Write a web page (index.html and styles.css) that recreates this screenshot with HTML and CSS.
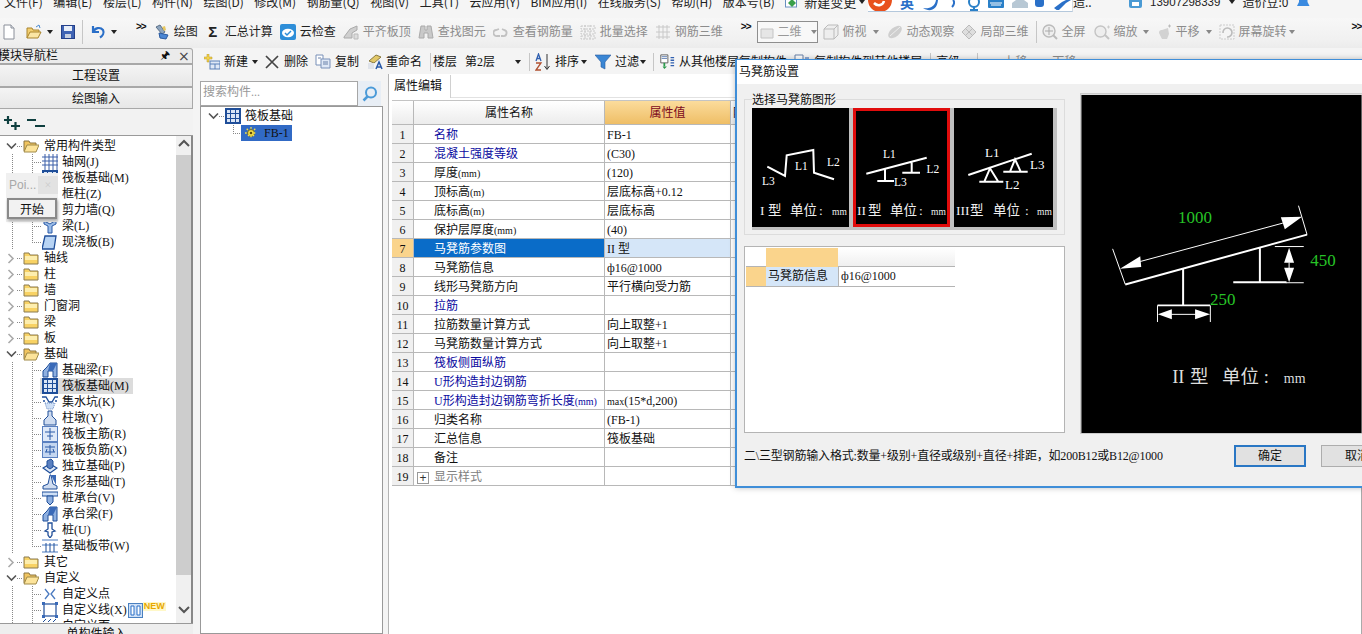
FILE: index.html
```html
<!DOCTYPE html>
<html lang="zh-CN">
<head>
<meta charset="utf-8">
<title>马凳筋设置</title>
<link rel="stylesheet" href="styles.css">
</head>
<body>
<svg class="sprite" xmlns="http://www.w3.org/2000/svg">
<symbol id="doc" viewBox="0 0 16 16"><path d="M3 1h7l3 3v11H3z" fill="#fff" stroke="#8a8f99"/><path d="M10 1v3h3" fill="#dfe3ea" stroke="#8a8f99"/></symbol>
<symbol id="open" viewBox="0 0 16 16"><path d="M1 14V4h5l1 2h6v2" fill="#f3cf70" stroke="#a9842c"/><path d="M1 14l3-6h11l-3 6z" fill="#fbe6a4" stroke="#a9842c"/><path d="M10 3l3-2 1 3" fill="none" stroke="#4a8ad0"/></symbol>
<symbol id="save" viewBox="0 0 16 16"><rect x="1.5" y="1.5" width="13" height="13" fill="#4064b4" stroke="#24408a"/><rect x="4" y="2" width="8" height="5" fill="#e8eef8"/><rect x="5" y="10" width="6" height="4" fill="#c8d0e0"/></symbol>
<symbol id="undo" viewBox="0 0 16 16"><path d="M3 2v6h6M3.5 8A5.5 5.5 0 0 1 13 6c1.5 3-.5 6-3 7.5" fill="none" stroke="#2a6fc8" stroke-width="2.2"/></symbol>
<symbol id="draw" viewBox="0 0 16 16"><path d="M2 3l4-2 5 7-3 2z" fill="#8fa6bf" stroke="#5a6f88"/><path d="M5 9l9 2-2 4-6-1z" fill="#4a86d4" stroke="#2a5aa0"/><path d="M8 3l3-1 1 4-2 1z" fill="#e8c860"/></symbol>
<symbol id="cloud" viewBox="0 0 16 16"><rect width="16" height="16" rx="2" fill="#2e8ed8"/><ellipse cx="8" cy="9" rx="6" ry="4.2" fill="#fff"/><path d="M5 9l2 2 4-4" stroke="#2e8ed8" fill="none" stroke-width="1.5"/></symbol>
<symbol id="align" viewBox="0 0 16 16"><path d="M1 13l6-8 7-3v4l-5 3v5H1z" fill="#cfcfcf" stroke="#aaa"/><path d="M11 10h4v5h-4z" fill="#ddd" stroke="#bbb"/></symbol>
<symbol id="bino" viewBox="0 0 16 16"><path d="M3 2h4v4h2V2h4l2 12h-5V9H6v5H1z" fill="#c9c9c9" stroke="#aaa"/></symbol>
<symbol id="link" viewBox="0 0 16 16"><path d="M6 5l-3 1a3 3 0 0 0 1 6h3M8 12h2a3 3 0 0 0 1-6L9 5" fill="none" stroke="#c2c2c2" stroke-width="1.800"/></symbol>
<symbol id="batch" viewBox="0 0 16 16"><path d="M1 2h14v3H1zM1 7h14v3H1zM1 12h14v3H1zM5 1v15M10 1v15" fill="none" stroke="#c8c8c8" stroke-dasharray="2 1"/></symbol>
<symbol id="r3d" viewBox="0 0 16 16"><path d="M1 3h14M1 8h14M1 13h14M4 1v14M8 1v14M12 1v14" fill="none" stroke="#c8c8c8"/></symbol>
<symbol id="cube" viewBox="0 0 16 16"><path d="M1 5h10v10H1zM1 5l4-4h10v10l-4 4M11 5l4-4" fill="#eee" stroke="#bbb"/></symbol>
<symbol id="flat" viewBox="0 0 16 16"><path d="M2 5h12v9H2z" fill="#e6e6e6" stroke="#c4c4c4"/></symbol>
<symbol id="orbit" viewBox="0 0 16 16"><ellipse cx="8" cy="8" rx="8" ry="4.500" transform="rotate(-40 8 8)" fill="#cfcfcf"/><path d="M3 12L13 3" stroke="#eee"/></symbol>
<symbol id="local" viewBox="0 0 16 16"><path d="M1 8l7-7 7 7-7 7z" fill="#dedede" stroke="#bbb"/><path d="M5 5l6 6M11 5l-6 6" stroke="#bbb"/></symbol>
<symbol id="full" viewBox="0 0 16 16"><circle cx="7" cy="7" r="6" fill="#eee" stroke="#bbb" stroke-width="1.400"/><path d="M7 3v8M3 7h8" stroke="#aaa"/><path d="M11 11l4 4" stroke="#bbb" stroke-width="2"/></symbol>
<symbol id="zoom" viewBox="0 0 16 16"><circle cx="6.500" cy="7.500" r="5.500" fill="#eee" stroke="#c4c4c4" stroke-width="1.400"/><path d="M11 11l4 4" stroke="#c4c4c4" stroke-width="2"/><path d="M13 3h3M14.500 1.500v3" stroke="#ccc"/></symbol>
<symbol id="pan" viewBox="0 0 16 16"><path d="M3 9c0-3 2-3 3-3l6-2 1 6-2 5H6z" fill="#d2d2d2"/><path d="M12 2h3M13.500 .5v3" stroke="#bbb"/></symbol>
<symbol id="rot" viewBox="0 0 16 16"><rect x="1" y="1" width="14" height="14" fill="#f4f4f4" stroke="#ccc" stroke-dasharray="2 1"/><path d="M4 9a4.500 4.500 0 1 1 4 4" fill="none" stroke="#bbb" stroke-width="1.600"/></symbol>
<symbol id="newc" viewBox="0 0 16 16"><path d="M3 0h2v3h3v2H5v3H3V5H0V3h3z" fill="#f2d24a" stroke="#b4962c" stroke-width=".5"/><rect x="6" y="7" width="10" height="8" fill="#dfe8f6" stroke="#5a80b8"/><path d="M6 10h10M11 10v5" stroke="#5a80b8"/></symbol>
<symbol id="del" viewBox="0 0 16 16"><path d="M2 2l12 12M14 2L2 14" stroke="#444" stroke-width="1.700"/></symbol>
<symbol id="copy" viewBox="0 0 16 16"><path d="M1 1h7v10H1z" fill="#fff" stroke="#7890b8"/><path d="M6 5h9v9H6z" fill="#dfe8f6" stroke="#7890b8"/><path d="M8 8h5M8 10h5M3 4h3" stroke="#6880a8"/></symbol>
<symbol id="rename" viewBox="0 0 16 16"><path d="M2 7l7-6 5 2-7 6z" fill="#e2c868" stroke="#8a7a40"/><path d="M1 9h6v6H1z" fill="#dfe3ea"/><path d="M9 15l3-7 3 7M10 13h4" fill="none" stroke="#2a5aa8" stroke-width="1.500"/></symbol>
<symbol id="sort" viewBox="0 0 16 18"><path d="M1 8l2.500-7L6 8M2 5.500h3" fill="none" stroke="#3060b0" stroke-width="1.300"/><path d="M1 10h5L1 17h5" fill="none" stroke="#b05030" stroke-width="1.300"/><path d="M12 1v15M9.500 13l2.500 3.500L14.500 13" fill="none" stroke="#333"/></symbol>
<symbol id="funnel" viewBox="0 0 16 16"><path d="M0 1h16l-6 7v7l-4-2V8z" fill="#3a86d4" stroke="#2a5aa0" stroke-width=".6"/></symbol>
<symbol id="fromf" viewBox="0 0 16 18"><path d="M1 1h8v9H1z" fill="#fff" stroke="#555"/><path d="M12 4h4M12 7h4M12 10h4M12 13h4" stroke="#3060b0" stroke-width="1.500"/><path d="M2 3h6M2 5h6" stroke="#5a7ab0"/><path d="M3 14l2 3 3-3" fill="#2a9a4a"/><path d="M5 10v4" stroke="#2a9a4a" stroke-width="2"/></symbol>
<symbol id="copyto" viewBox="0 0 16 16"><path d="M1 1h8v10H1z" fill="#fff" stroke="#6880a8"/><path d="M11 4h4M11 8h4" stroke="#3060b0"/></symbol>
<symbol id="expand" viewBox="0 0 16 14"><path d="M0 4h8M4 0v8M7 10h9M11.500 6v8" stroke="#0f3f3f" stroke-width="2.200" fill="none"/></symbol>
<symbol id="collapse" viewBox="0 0 18 14"><path d="M0 4h9M8 10h10" stroke="#0f3f3f" stroke-width="2.200" fill="none"/></symbol>
<symbol id="chev-o" viewBox="0 0 11 8"><path d="M1 1.500l4.500 4.500L10 1.500" fill="none" stroke="#555" stroke-width="1.600"/></symbol>
<symbol id="chev-c" viewBox="0 0 8 11"><path d="M1.500 1l4.500 4.500L1.500 10" fill="none" stroke="#aaa" stroke-width="1.600"/></symbol>
<symbol id="f-open" viewBox="0 0 16 14"><path d="M1 12V2h5l1 2h6v2" fill="#f1c560" stroke="#8a7440"/><path d="M1 13l3-7h12l-3 7z" fill="#fde49a" stroke="#a08a48"/></symbol>
<symbol id="f-closed" viewBox="0 0 16 14"><path d="M1 13V2h5l1 2h8v9z" fill="#f8d264" stroke="#8a7a50"/><path d="M2 5h12v4H2z" fill="#fdeeae"/></symbol>
<symbol id="grid" viewBox="0 0 16 16"><path d="M3 0v16M7 0v16M11 0v16M15 0v16M0 3h16M0 7h16M0 11h16" stroke="#3a5fa8"/></symbol>
<symbol id="raft" viewBox="0 0 16 16"><rect x="1" y="1" width="14" height="14" fill="#dbe6f6" stroke="#1f4e99" stroke-width="2"/><path d="M1 5.500h14M1 10.500h14M5.500 1v14M10.500 1v14" stroke="#1f4e99"/></symbol>
<symbol id="col" viewBox="0 0 16 16"><path d="M5 1h8v12l-4 2-4-2z" fill="#8fb0e0" stroke="#2a5aa8"/></symbol>
<symbol id="wall" viewBox="0 0 16 16"><path d="M2 14V5l6-4h6v9l-6 4z" fill="#c8d8f0" stroke="#2a5aa8"/></symbol>
<symbol id="beam" viewBox="0 0 16 16"><path d="M2 3l6 3 6-4v4l-4 2v7H6V8L2 6z" fill="#9abce8" stroke="#2a5aa8"/></symbol>
<symbol id="slab" viewBox="0 0 16 16"><path d="M3 2h11l-2 13H0z" fill="#b8d4f4" stroke="#1f4e99" stroke-width="1.300"/></symbol>
<symbol id="fbeam" viewBox="0 0 16 16"><path d="M1 15v-6l4-4 3-4h7v14H11V9H6v6z" fill="#8fb0e0" stroke="#1f4e99"/><path d="M8 1l7 0-4 8H6z" fill="#3a6ab8"/></symbol>
<symbol id="pit" viewBox="0 0 16 16"><path d="M0 3h4l3 5h3l3-5h3M1 7h2M13 7h2" fill="none" stroke="#1f4e99" stroke-width="1.300"/><path d="M3 9h10l-2 6H5z" fill="#cfe0f6" stroke="#6a8ac0" stroke-dasharray="1 1"/></symbol>
<symbol id="pier" viewBox="0 0 16 16"><path d="M6 1h4v5l4 4v5H2v-5l4-4z" fill="#cfdcf0" stroke="#1f4e99"/></symbol>
<symbol id="rplus" viewBox="0 0 16 16"><rect x=".5" y=".5" width="15" height="15" fill="#dfe9f8" stroke="#5a80c0"/><path d="M3 6h10M8 2v12M5 10h6" stroke="#2a5aa8"/></symbol>
<symbol id="rminus" viewBox="0 0 16 16"><rect x=".5" y=".5" width="15" height="15" fill="#c4d6f0" stroke="#5a80c0"/><path d="M3 5h10M3 10h10M8 3v10M5 7l-1 3M11 7l1 3" stroke="#2a5aa8"/></symbol>
<symbol id="iso" viewBox="0 0 16 16"><path d="M1 10l7-4 7 4-7 5z" fill="#dbe6f6" stroke="#1f4e99" stroke-width="1.200"/><path d="M5 3l4-2 2 2v6l-3 2-3-2z" fill="#5a80c0" stroke="#1f4e99"/></symbol>
<symbol id="strip" viewBox="0 0 16 16"><path d="M1 15v-3l5-2 2-9 1 0 2 9 4 2v3z" fill="#cfdcf0" stroke="#1f4e99"/><path d="M9 1h5v10z" fill="#3a6ab8"/></symbol>
<symbol id="cap" viewBox="0 0 16 16"><path d="M0 2h16v4H0z" fill="#cfe0f6" stroke="#1f4e99"/><path d="M5 6h6v6l-3 3-3-3z" fill="#8fb0e0" stroke="#1f4e99"/></symbol>
<symbol id="pile" viewBox="0 0 16 16"><path d="M6 1h4v6l3 2-3 1v3l-2 3-2-3v-3L3 9l3-2z" fill="#fff" stroke="#1f4e99" stroke-width="1.300"/></symbol>
<symbol id="band" viewBox="0 0 16 16"><path d="M0 2h16M0 14h16M0 7h16" stroke="#4a7ac0"/><path d="M4 14V5M8 14V5M12 14V5" stroke="#1f4e99"/></symbol>
<symbol id="upt" viewBox="0 0 16 16"><path d="M3 3l4 5-4 5M13 3L9 8l4 5" fill="none" stroke="#4a7ac0" stroke-width="1.300"/></symbol>
<symbol id="uline" viewBox="0 0 16 16"><rect x="2" y="2" width="12" height="12" fill="#fff" stroke="#1f4e99" stroke-width="1.200"/><path d="M0 0h3v3H0zM13 0h3v3h-3zM0 13h3v3H0zM13 13h3v3h-3z" fill="#3a6ab8"/></symbol>
<symbol id="uface" viewBox="0 0 16 16"><path d="M1 4l3-3M6 4l3-3M11 4l3-3" stroke="#1f4e99"/></symbol>
<symbol id="gearch" viewBox="0 0 14 14"><circle cx="7" cy="7" r="4" fill="#f4e04a" stroke="#6a5a10"/><path d="M7 0v14M0 7h14M2 2l10 10M12 2L2 12" stroke="#f4e04a" stroke-width="1.500" stroke-dasharray="2 8"/><circle cx="7" cy="7" r="1.500" fill="#5a4a10"/></symbol>
</svg>

<header class="menubar">
  <span>文件(F)</span><span>编辑(E)</span><span>楼层(L)</span><span>构件(N)</span><span>绘图(D)</span><span>修改(M)</span><span>钢筋量(Q)</span><span>视图(V)</span><span>工具(T)</span><span>云应用(Y)</span><span>BIM应用(I)</span><span>在线服务(S)</span><span>帮助(H)</span><span>版本号(B)</span>
  <span class="change"><svg class="ic12"><rect x=".5" y="0" width="11" height="11" fill="#fff" stroke="#6a90c0"/><path d="M7 3l4 4-4 4-4-4z" fill="#3aa04a"/></svg><b>新建变更</b><i class="caret dark"></i></span>
  <span class="more">造..</span>
  <span class="user"><svg class="ic12"><rect width="13" height="12" rx="2" fill="#4a9ad4"/><path d="M3 6h7v4H3z" fill="#fff"/></svg><b class="phone">13907298339</b><i class="caret dark"></i><span class="bean">造价豆:0</span><svg class="bell"><path d="M7.500 0c4 0 4 3 4 6l2 4H1l2-4c0-3 0-6 4.500-6z" fill="#3a8ae0"/></svg></span>
</header>

<div class="ime">
  <svg class="ime-logo"><circle cx="12" cy="0" r="12" fill="#e8501c"/><path d="M6 3c4 4 9 2 10-2" fill="none" stroke="#fff" stroke-width="2.500"/></svg>
  <b class="ime-en">英</b>
  <svg class="ime-i1"><path d="M14 0c-1 7-7 9-13 8 6 4 14 3 15-8z" fill="#2a70c8"/></svg>
  <svg class="ime-i2"><path d="M2 0c2 2 1 5-1 7" stroke="#2a70c8" stroke-width="2" fill="none"/></svg>
  <svg class="ime-i3"><circle cx="6" cy="2" r="5" fill="none" stroke="#2a80c8" stroke-width="2"/><path d="M6 7v3M2 10h8" stroke="#2a80c8" stroke-width="2"/></svg>
  <svg class="ime-i4"><rect x="0" y="-2" width="16" height="10" rx="1" fill="#2a80c8"/><path d="M2 3h12M3 5h10" stroke="#fff"/></svg>
  <svg class="ime-i5"><path d="M0 3l4-3h8l4 3v5H0z" fill="#b8c8d4"/></svg>
  <svg class="ime-i6"><rect x="0" y="-2" width="9" height="9" rx="3" fill="#2a70c8"/></svg>
  <svg class="ime-i7"><path d="M1 8L9 2l4-2 5 0-5 3-5 5-3 3z" fill="#2a70c8"/></svg>
</div>

<nav class="toolbar">
  <svg class="i first"><use href="#doc"/></svg>
  <svg class="i m9"><use href="#open"/></svg><i class="caret dark m5"></i>
  <svg class="i m7"><use href="#save"/></svg><i class="sep tall"></i>
  <svg class="i m7"><use href="#undo"/></svg><i class="caret dark m5"></i>
  <b class="chevrons c1">&gt;&gt;</b>
  <div class="tools">
    <span class="tool"><svg class="i"><use href="#draw"/></svg>绘图</span>
    <span class="tool"><b class="sigma">Σ</b>汇总计算</span>
    <span class="tool"><svg class="i"><use href="#cloud"/></svg>云检查</span>
    <span class="tool off"><svg class="i"><use href="#align"/></svg>平齐板顶</span>
    <span class="tool off"><svg class="i"><use href="#bino"/></svg>查找图元</span>
    <span class="tool off"><svg class="i"><use href="#link"/></svg>查看钢筋量</span>
    <span class="tool off"><svg class="i"><use href="#batch"/></svg>批量选择</span>
    <span class="tool off"><svg class="i"><use href="#r3d"/></svg>钢筋三维</span>
  </div>
  <b class="chevrons c2">&gt;&gt;</b>
  <div class="combo"><svg class="i"><use href="#flat"/></svg><span>二维</span><i class="caret"></i></div>
  <span class="tool off m5"><svg class="i"><use href="#cube"/></svg>俯视<i class="caret k2"></i></span>
  <span class="tool off m8"><svg class="i"><use href="#orbit"/></svg>动态观察</span>
  <span class="tool off m6"><svg class="i"><use href="#local"/></svg>局部三维</span>
  <i class="sep mid"></i>
  <span class="tool off"><svg class="i"><use href="#full"/></svg>全屏</span>
  <span class="tool off m8"><svg class="i"><use href="#zoom"/></svg>缩放<i class="caret k1"></i></span>
  <span class="tool off m7"><svg class="i"><use href="#pan"/></svg>平移<i class="caret k2"></i></span>
  <span class="tool off m7"><svg class="i"><use href="#rot"/></svg>屏幕旋转<i class="caret kn"></i></span>
  <b class="chevrons c3">&gt;&gt;</b>
</nav>

<main class="main">
  <aside class="nav">
    <div class="nav-title"><span class="nav-name">模块导航栏</span><span class="pin">&#x1F588;</span><span class="close">×</span></div>
    <div class="nav-btn">工程设置</div>
    <div class="nav-btn second">绘图输入</div>
    <div class="nav-tools"><svg class="ex"><use href="#expand"/></svg><svg class="co"><use href="#collapse"/></svg></div>
    <div class="tree-wrap">
      <div class="tree">
        <div class="node"><svg class="chev"><use href="#chev-o"/></svg><svg class="fld"><use href="#f-open"/></svg><span>常用构件类型</span></div>
        <div class="leaf"><svg class="i"><use href="#grid"/></svg><span>轴网(J)</span></div>
        <div class="leaf"><svg class="i"><use href="#raft"/></svg><span>筏板基础(M)</span></div>
        <div class="leaf"><svg class="i"><use href="#col"/></svg><span>框柱(Z)</span></div>
        <div class="leaf"><svg class="i"><use href="#wall"/></svg><span>剪力墙(Q)</span></div>
        <div class="leaf"><svg class="i"><use href="#beam"/></svg><span>梁(L)</span></div>
        <div class="leaf end"><svg class="i"><use href="#slab"/></svg><span>现浇板(B)</span></div>
        <div class="node"><svg class="chev closed"><use href="#chev-c"/></svg><svg class="fld"><use href="#f-closed"/></svg><span>轴线</span></div>
        <div class="node"><svg class="chev closed"><use href="#chev-c"/></svg><svg class="fld"><use href="#f-closed"/></svg><span>柱</span></div>
        <div class="node"><svg class="chev closed"><use href="#chev-c"/></svg><svg class="fld"><use href="#f-closed"/></svg><span>墙</span></div>
        <div class="node"><svg class="chev closed"><use href="#chev-c"/></svg><svg class="fld"><use href="#f-closed"/></svg><span>门窗洞</span></div>
        <div class="node"><svg class="chev closed"><use href="#chev-c"/></svg><svg class="fld"><use href="#f-closed"/></svg><span>梁</span></div>
        <div class="node"><svg class="chev closed"><use href="#chev-c"/></svg><svg class="fld"><use href="#f-closed"/></svg><span>板</span></div>
        <div class="node"><svg class="chev"><use href="#chev-o"/></svg><svg class="fld"><use href="#f-open"/></svg><span>基础</span></div>
        <div class="leaf"><svg class="i"><use href="#fbeam"/></svg><span>基础梁(F)</span></div>
        <div class="leaf sel"><svg class="i"><use href="#raft"/></svg><span>筏板基础(M)</span></div>
        <div class="leaf"><svg class="i"><use href="#pit"/></svg><span>集水坑(K)</span></div>
        <div class="leaf"><svg class="i"><use href="#pier"/></svg><span>柱墩(Y)</span></div>
        <div class="leaf"><svg class="i"><use href="#rplus"/></svg><span>筏板主筋(R)</span></div>
        <div class="leaf"><svg class="i"><use href="#rminus"/></svg><span>筏板负筋(X)</span></div>
        <div class="leaf"><svg class="i"><use href="#iso"/></svg><span>独立基础(P)</span></div>
        <div class="leaf"><svg class="i"><use href="#strip"/></svg><span>条形基础(T)</span></div>
        <div class="leaf"><svg class="i"><use href="#cap"/></svg><span>桩承台(V)</span></div>
        <div class="leaf"><svg class="i"><use href="#fbeam"/></svg><span>承台梁(F)</span></div>
        <div class="leaf"><svg class="i"><use href="#pile"/></svg><span>桩(U)</span></div>
        <div class="leaf end"><svg class="i"><use href="#band"/></svg><span>基础板带(W)</span></div>
        <div class="node"><svg class="chev closed"><use href="#chev-c"/></svg><svg class="fld"><use href="#f-closed"/></svg><span>其它</span></div>
        <div class="node"><svg class="chev"><use href="#chev-o"/></svg><svg class="fld"><use href="#f-open"/></svg><span>自定义</span></div>
        <div class="leaf"><svg class="i"><use href="#upt"/></svg><span>自定义点</span></div>
        <div class="leaf"><svg class="i"><use href="#uline"/></svg><span>自定义线(X)</span><svg class="book"><rect x=".5" y=".5" width="14" height="14" fill="#cfe0f6" stroke="#4a80c0"/><path d="M3 3h3v9H3zM9 3h3v9H9z" fill="#fff" stroke="#2a70c8"/></svg><b class="newtag">NEW</b></div>
        <div class="leaf"><svg class="i"><use href="#uface"/></svg><span>自定义面</span></div>
      </div>
      <div class="scroll">
        <svg class="arrow"><path d="M3 10l5-5 5 5" fill="none" stroke="#555" stroke-width="2"/></svg>
        <div class="thumb"></div>
        <svg class="arrow down"><path d="M3 5l5 5 5-5" fill="none" stroke="#555" stroke-width="2"/></svg>
      </div>
    </div>
    <div class="nav-foot">单构件输入</div>
  </aside>

  <section class="work">
    <div class="ribbon">
      <span class="rt"><svg class="i"><use href="#newc"/></svg>新建<i class="caret dark"></i></span>
      <span class="rt g6"><svg class="i"><use href="#del"/></svg>删除</span>
      <span class="rt g7"><svg class="i"><use href="#copy"/></svg>复制</span>
      <span class="rt g8"><svg class="i tight"><use href="#rename"/></svg>重命名</span>
      <i class="sep r"></i>
      <span class="floor">楼层</span><span class="floor-v">第2层</span><i class="caret dark fc"></i>
      <i class="sep r s2"></i>
      <span class="rt g5"><svg class="sorticon"><use href="#sort"/></svg>排序<i class="caret dark kn"></i></span>
      <span class="rt g8"><svg class="i"><use href="#funnel"/></svg>过滤<i class="caret dark kn2"></i></span>
      <i class="sep r s3"></i>
      <span class="rt g5"><svg class="i"><use href="#fromf"/></svg>从其他楼层复制构件</span>
      <span class="rt g7"><svg class="i"><use href="#copyto"/></svg>复制构件到其他楼层</span>
      <i class="sep r s4"></i>
      <span class="rt g5">高级</span>
      <i class="sep r s5"></i>
      <span class="rt g24 off">上移</span>
      <span class="rt g24 off">下移</span>
    </div>
    <div class="panes">
      <div class="comp">
        <div class="search"><span class="search-in">搜索构件...</span><span class="search-btn"><svg class="mag"><circle cx="9" cy="6.500" r="5" fill="none" stroke="#4a9ad8" stroke-width="2"/><path d="M5.500 10.500L1.500 14.500" stroke="#4a9ad8" stroke-width="2.500"/></svg></span></div>
        <div class="ctree">
          <div class="croot"><svg class="chev"><use href="#chev-o"/></svg><svg class="i"><use href="#raft"/></svg><span>筏板基础</span></div>
          <div class="cchild"><span class="csel"><svg class="gear"><use href="#gearch"/></svg><span>FB-1</span></span></div>
        </div>
      </div>
      <div class="prop">
        <div class="tabs"><span class="tab">属性编辑</span></div>
        <table class="grid">
          <colgroup><col class="c-n"><col class="c-a"><col class="c-b"><col class="c-c"></colgroup>
          <thead><tr><th class="h-n"></th><th class="h-a">属性名称</th><th class="h-b">属性值</th><th class="h-c">附加</th></tr></thead>
          <tbody>
            <tr><td class="n">1</td><td class="k blue">名称</td><td class="v">FB-1</td><td></td></tr>
            <tr><td class="n">2</td><td class="k blue">混凝土强度等级</td><td class="v">(C30)</td><td></td></tr>
            <tr><td class="n">3</td><td class="k">厚度<small>(mm)</small></td><td class="v">(120)</td><td></td></tr>
            <tr><td class="n">4</td><td class="k">顶标高<small>(m)</small></td><td class="v">层底标高+0.12</td><td></td></tr>
            <tr><td class="n">5</td><td class="k">底标高<small>(m)</small></td><td class="v">层底标高</td><td></td></tr>
            <tr><td class="n">6</td><td class="k">保护层厚度<small>(mm)</small></td><td class="v">(40)</td><td></td></tr>
            <tr class="cur"><td class="n">7</td><td class="k">马凳筋参数图</td><td class="v">II 型</td><td></td></tr>
            <tr><td class="n">8</td><td class="k">马凳筋信息</td><td class="v">ф16@1000</td><td></td></tr>
            <tr><td class="n">9</td><td class="k">线形马凳筋方向</td><td class="v">平行横向受力筋</td><td></td></tr>
            <tr><td class="n">10</td><td class="k blue">拉筋</td><td class="v"></td><td></td></tr>
            <tr><td class="n">11</td><td class="k">拉筋数量计算方式</td><td class="v">向上取整+1</td><td></td></tr>
            <tr><td class="n">12</td><td class="k">马凳筋数量计算方式</td><td class="v">向上取整+1</td><td></td></tr>
            <tr><td class="n">13</td><td class="k blue">筏板侧面纵筋</td><td class="v"></td><td></td></tr>
            <tr><td class="n">14</td><td class="k blue">U形构造封边钢筋</td><td class="v"></td><td></td></tr>
            <tr><td class="n">15</td><td class="k blue">U形构造封边钢筋弯折长度<small>(mm)</small></td><td class="v"><small>max</small>(15*d,200)</td><td></td></tr>
            <tr><td class="n">16</td><td class="k">归类名称</td><td class="v">(FB-1)</td><td></td></tr>
            <tr><td class="n">17</td><td class="k">汇总信息</td><td class="v">筏板基础</td><td></td></tr>
            <tr><td class="n">18</td><td class="k">备注</td><td class="v"></td><td></td></tr>
            <tr><td class="n">19</td><td class="k grey"><i class="plus">+</i>显示样式</td><td class="v"></td><td></td></tr>
          </tbody>
        </table>
      </div>
    </div>
  </section>
</main>

<div class="popup">
  <div class="pop-top"><span class="pop-name">Poi...</span><span class="pop-x">×</span></div>
  <div class="pop-btn">开始</div>
</div>

<div class="dialog">
  <div class="dlg-title">马凳筋设置</div>
  <div class="dlg-body">
    <div class="dlg-cols">
      <div class="dlg-left">
        <div class="group">
          <div class="group-label">选择马凳筋图形</div>
          <div class="thumbs">
            <svg class="thumb-img t1" viewBox="752 107 97 119">
              <path class="w2" d="M767.300 165.700L785 175l1.700-20.700L813.300 149l.7 22.700 20 6.600"/>
              <text class="lbl" x="762" y="184">L3</text><text class="lbl" x="795" y="169">L1</text><text class="lbl" x="827" y="165">L2</text>
              <text class="cap"><tspan x="760" y="214">I</tspan><tspan x="768" y="214">型</tspan><tspan x="790" y="214">单位</tspan><tspan x="819" y="214">:</tspan><tspan class="mm" x="832" y="214">mm</tspan></text>
            </svg>
            <svg class="thumb-img t2" viewBox="854 107 97 119">
              <path class="w2" d="M867.300 172.700L927.700 156.700M886 168v12M878.300 180H895M912.700 160.700v11M903.300 171.700H921"/>
              <text class="lbl" x="884" y="157">L1</text><text class="lbl" x="927.500" y="172">L2</text><text class="lbl" x="895" y="185">L3</text>
              <text class="cap"><tspan x="858" y="214">II</tspan><tspan x="869" y="214">型</tspan><tspan x="891" y="214">单位</tspan><tspan x="920" y="214">:</tspan><tspan class="mm" x="932" y="214">mm</tspan></text>
            </svg>
            <svg class="thumb-img t3" viewBox="954 107 99 119">
              <path class="w2" d="M968.300 174L1031.700 152.700M990 167.300L984.300 180.700H998.300zM979.300 180.700H1003.300M1015 158.300L1010 170.700H1020.700zM1003.300 170.700H1027.700"/>
              <text class="lbl big" x="985" y="156">L1</text><text class="lbl big" x="1030" y="168">L3</text><text class="lbl big" x="1005" y="188">L2</text>
              <text class="cap"><tspan x="956" y="214">III</tspan><tspan x="970" y="214">型</tspan><tspan x="993" y="214">单位</tspan><tspan x="1025" y="214">:</tspan><tspan class="mm" x="1037" y="214">mm</tspan></text>
            </svg>
          </div>
        </div>
        <div class="info">
          <div class="info-grid">
            <div class="ig h0"></div><div class="ig h1"></div><div class="ig h2"></div>
            <div class="ig r0"></div><div class="ig r1">马凳筋信息</div><div class="ig r2">ф16@1000</div>
          </div>
        </div>
      </div>
      <svg class="preview" viewBox="1081 94 281 339">
        <rect x="1081" y="94" width="281" height="339" fill="#000"/>
        <path class="w2b" d="M1125 284L1307.300 234M1183 268.300V305M1157.300 305H1210M1260 246.700V281.700M1233.300 281.700H1286.700"/>
        <path class="w1" d="M1112.300 248.300L1125 284M1298.700 205L1307.300 234M1140 261L1283 222.500M1157.300 305V321.700M1210.300 305V321.700M1171 314H1196M1275 246H1304M1286 282.300H1304M1289.300 262V268"/>
        <path class="wf" d="M1119.700 268.300L1140 255.700 1141 266.500zM1302.300 216L1281 216.700 1285 228.700zM1157.700 314L1171.700 309V319zM1210 314L1195 309V319zM1289.300 247.300L1284.300 262.300H1294.300zM1289.300 281.700L1284.300 267.300H1294.300z"/>
        <text class="dim" x="1178" y="222">1000</text>
        <text class="dim" x="1310.500" y="266">450</text>
        <text class="dim" x="1210" y="305">250</text>
        <text class="capbig"><tspan x="1172" y="383">II</tspan><tspan x="1190" y="383">型</tspan><tspan x="1222" y="383">单位</tspan><tspan x="1264" y="383">:</tspan><tspan class="mmbig" x="1284" y="383">mm</tspan></text>
      </svg>
    </div>
    <div class="dlg-foot">
      <span class="hint">二\三型钢筋输入格式:数量+级别+直径或级别+直径+排距，如200B12或B12@1000</span>
      <span class="btn ok">确定</span>
      <span class="btn">取消</span>
    </div>
  </div>
</div>
</body>
</html>
```
FILE: styles.css
```css
* { box-sizing: border-box; }
html, body { margin: 0; padding: 0; }
body {
  width: 1362px; height: 634px; overflow: hidden; position: relative;
  background: #f4f4f4; color: #111;
  font: 12px/16px "Liberation Serif", "Noto Sans CJK SC", serif;
  display: flex; flex-direction: column;
}
i { font-style: normal; }
.sprite { display: none; }
svg { display: block; flex: none; }
.i { width: 16px; height: 16px; }
.m3 { margin-left: 3px; } .m5 { margin-left: 5px; } .m6 { margin-left: 6px; } .m7 { margin-left: 7px; } .m8 { margin-left: 8px; } .m9 { margin-left: 9px; }
.k1 { margin-left: 1px; } .k2 { margin-left: 2px; } .kn { margin-left: -2px; } .kn2 { margin-left: -3px; }
.caret { display: inline-block; flex: none; width: 0; height: 0; border: 3px solid transparent; border-top: 4px solid #888; border-bottom: 0; }
.caret.dark { border-top-color: #222; }
.sep { display: block; flex: none; width: 1px; background: #c6c6c6; }
.off { color: #8c8c8c; }

/* menu */
.menubar {
  height: 18px; flex: none; display: flex; align-items: flex-start; gap: 10.500px; padding-left: 4px;
  background: #f5f5f5; overflow: hidden;
  font-family: "Noto Sans CJK SC", sans-serif; line-height: 12px; color: #222;
}
.menubar > span { margin-top: -4px; white-space: nowrap; }
.change, .user { display: flex; align-items: center; }
.ic12 { width: 13px; height: 12px; }
.change b { font-weight: 400; font-size: 13px; margin: 0 3px 0 6px; }
.more { margin-left: 197px; }
.user { margin-left: 27px; }
.phone { font: 400 11.500px/12px "Liberation Sans", sans-serif; margin: 0 9px 0 8px; }
.bean { margin: 0 8px 0 7px; }
.bell { width: 15px; height: 12px; }

/* IME */
.ime {
  position: absolute; left: 868px; top: 0; width: 205px; height: 12px; background: #fff;
  border-bottom: 1px solid #b4c8dc; border-right: 1px solid #d4dce4; display: flex; align-items: flex-start; overflow: hidden;
}
.ime-logo { width: 24px; height: 12px; }
.ime-en { color: #2a70c8; font: 700 14px/12px "Noto Sans CJK SC", sans-serif; margin: -4px 0 0 8px; }
.ime-i1 { width: 16px; height: 11px; margin-left: 8px; }
.ime-i2 { width: 4px; height: 8px; margin-left: 13px; }
.ime-i3 { width: 12px; height: 11px; margin-left: 13px; }
.ime-i4 { width: 16px; height: 8px; margin-left: 8px; }
.ime-i5 { width: 16px; height: 10px; margin-left: 8px; }
.ime-i6 { width: 9px; height: 8px; margin-left: 7px; }
.ime-i7 { width: 19px; height: 10px; margin-left: 9px; }

/* top toolbar */
.toolbar {
  height: 30px; flex: none; display: flex; align-items: center; padding-bottom: 2px;
  background: linear-gradient(#f7f7f7, #f1f1f1 70%, #ececec);
}
.first { margin-left: 1px; }
.sep.tall { height: 24px; margin: 0 0 0 6px; }
.chevrons { font: 700 10px/10px "Liberation Sans", sans-serif; letter-spacing: -1px; align-self: flex-start; margin-top: 4px; flex: none; }
.c1 { margin-left: 19px; }
.c2 { margin-left: 18px; }
.c3 { margin-left: 57px; }
.tools { display: flex; gap: 7px; margin-left: 8px; }
.tool { display: flex; align-items: center; gap: 4px; white-space: nowrap; color: #222; flex: none; }
.tool.off { color: #8c8c8c; }
.sigma { width: 16px; text-align: center; font: 700 15px/16px "Liberation Sans", sans-serif; }
.combo { width: 61px; height: 22px; margin-left: 6px; border: 1px solid #8e8e8e; display: flex; align-items: center; gap: 3px; padding-left: 1px; color: #999; background: #f8f8f8; flex: none; white-space: nowrap; }
.combo .caret { margin-left: 6px; }
.sep.mid { height: 22px; margin: 0 5px 0 7px; }

/* main */
.main { flex: 1; display: flex; min-height: 0; }
.nav { width: 193px; flex: none; display: flex; flex-direction: column; }
.nav-title { height: 16px; flex: none; display: flex; align-items: center; background: #ebebeb; border: 1px solid #a8a8a8; border-left: 0; border-radius: 0 3px 0 0; overflow: hidden; }
.nav-name { margin-left: -2px; flex: 1; }
.pin { font: 11px/14px "DejaVu Sans", sans-serif; width: 12px; margin-right: 6px; }
.close { font: 14px/14px "DejaVu Sans", sans-serif; width: 14px; color: #444; }
.nav-btn { height: 23px; flex: none; text-align: center; line-height: 22px; background: linear-gradient(#f4f4f4, #e7e7e7); border: 1px solid #a8a8a8; border-left: 0; }
.nav-btn.second { height: 22px; }
.nav-tools { height: 27px; flex: none; display: flex; align-items: center; gap: 7px; padding: 1px 0 0 4px; background: #f2f2f2; border-bottom: 1px solid #9a9a9a; }
.ex { width: 16px; height: 14px; }
.co { width: 18px; height: 14px; }
.tree-wrap { flex: 1; min-height: 0; display: flex; background: #fff; border-right: 2px solid #888; }
.tree { flex: 1; min-width: 0; overflow: hidden; padding-top: 2px; }
.node, .leaf { height: 16px; display: flex; align-items: center; white-space: nowrap; }
.node {
  padding-left: 6px;
  background: repeating-linear-gradient(to right, #888 0 1px, transparent 1px 2px) 17px 8px / 6px 1px no-repeat;
}
.chev { width: 11px; height: 8px; }
.chev.closed { width: 8px; height: 11px; margin: 0 2px 0 1px; }
.fld { width: 16px; height: 14px; margin: 0 5px 0 6px; }
.leaf {
  padding-left: 42px;
  background:
    repeating-linear-gradient(to right, #888 0 1px, transparent 1px 2px) 32px 8px / 10px 1px no-repeat,
    repeating-linear-gradient(to bottom, #888 0 1px, transparent 1px 2px) 32px 0 / 1px 100% no-repeat,
    repeating-linear-gradient(to bottom, #888 0 1px, transparent 1px 2px) 12px 0 / 1px 100% no-repeat;
}
.leaf.end {
  background:
    repeating-linear-gradient(to right, #888 0 1px, transparent 1px 2px) 32px 8px / 10px 1px no-repeat,
    repeating-linear-gradient(to bottom, #888 0 1px, transparent 1px 2px) 32px 0 / 1px 8px no-repeat,
    repeating-linear-gradient(to bottom, #888 0 1px, transparent 1px 2px) 12px 0 / 1px 100% no-repeat;
}
.leaf.sel { background: linear-gradient(#dcdcdc, #dcdcdc) 40px 0 / 93px 100% no-repeat, repeating-linear-gradient(to bottom, #888 0 1px, transparent 1px 2px) 32px 0 / 1px 100% no-repeat, repeating-linear-gradient(to bottom, #888 0 1px, transparent 1px 2px) 12px 0 / 1px 100% no-repeat; }
.leaf > span { margin-left: 4px; }
.book { width: 15px; height: 15px; margin-left: 1px; }
.newtag { font: 700 9px/9px "Liberation Sans", sans-serif; color: #e8a800; background: #fff8c8; align-self: flex-start; padding: 0 1px; }
.scroll { width: 15px; flex: none; display: flex; flex-direction: column; background: #f0f0f0; }
.arrow { width: 15px; height: 19px; }
.thumb { width: 15px; height: 420px; background: #cdcdcd; }
.arrow.down { margin-top: auto; margin-bottom: 3px; height: 18px; }
.nav-foot { height: 11px; flex: none; text-align: center; line-height: 20px; overflow: hidden; background: #eee; border-top: 1px solid #999; }

.work { flex: 1; min-width: 0; display: flex; flex-direction: column; margin-left: 3px; }
.ribbon { height: 26px; flex: none; display: flex; align-items: center; padding: 2px 0 0 8px; background: #f4f4f4; white-space: nowrap; }
.rt { display: flex; align-items: center; gap: 4px; flex: none; }
.g5 { margin-left: 5px; } .g6 { margin-left: 6px; } .g7 { margin-left: 7px; } .g8 { margin-left: 8px; } .g24 { margin-left: 25px; }
.tight { margin-right: -1px; }
.sep.r { height: 18px; margin-left: 8px; margin-right: 2px; }
.floor { flex: none; }
.floor-v { flex: none; margin-left: 8px; width: 50px; }
.sep.s2 { margin-right: 0; }
.sep.s3 { margin-left: 7px; margin-right: 0; }
.sep.s4 { margin-right: 0; }
.sep.s5 { margin-left: 17px; margin-right: 0; }
.sorticon { width: 16px; height: 18px; }
.panes { flex: 1; display: flex; min-height: 0; }
.comp { width: 192px; flex: none; padding: 7px 5px 0 4px; display: flex; flex-direction: column; background: #f4f4f4; }
.search { height: 25px; flex: none; display: flex; }
.search-in { width: 158px; border: 1px solid #a6a6a6; background: #fff; color: #999; line-height: 21px; padding-left: 2px; }
.search-btn { width: 23px; background: #e8eef5; display: flex; align-items: center; justify-content: center; }
.mag { width: 15px; height: 16px; }
.ctree { flex: 1; background: #fff; border: 1px solid #999; }
.croot { height: 18px; display: flex; align-items: center; padding-left: 7px; background: repeating-linear-gradient(to right, #888 0 1px, transparent 1px 2px) 18px 9px / 6px 1px no-repeat; }
.croot .i { margin-left: 6px; }
.croot span { margin-left: 4px; }
.cchild { height: 16px; padding-left: 40px; background:
  repeating-linear-gradient(to right, #888 0 1px, transparent 1px 2px) 32px 8px / 8px 1px no-repeat,
  repeating-linear-gradient(to bottom, #888 0 1px, transparent 1px 2px) 32px 0 / 1px 9px no-repeat; }
.csel { display: flex; align-items: center; gap: 7px; width: 51px; height: 16px; background: #316ac5; padding-left: 4px; }
.gear { width: 12px; height: 12px; }
.csel span { color: #111; }
.prop { flex: 1; min-width: 0; background: #fff; border-left: 1px solid #b4b4b4; border-right: 1px solid #aaa; padding: 1px 0 0 3px; }
.tabs { height: 23px; margin-left: -3px; display: flex; border-bottom: 1px solid #e2e2e2; }
.tab { width: 62px; height: 23px; border-right: 1px solid #d0d0d0; background: #fff; padding-left: 5px; line-height: 22px; }
.grid { margin-top: 2px; border-collapse: separate; border-spacing: 0; table-layout: fixed; width: 370px; border-top: 1px solid #c4c4c4; }
.c-n { width: 22px; } .c-a { width: 191px; } .c-b { width: 126px; } .c-c { width: 31px; }
th { height: 24px; font-weight: 400; padding: 0; border-right: 1px solid #b8b8b8; border-bottom: 1px solid #b8b8b8; background: linear-gradient(#fff, #ececec); overflow: hidden; white-space: nowrap; }
.h-b { background: linear-gradient(#fbdc9c, #efbe66); color: #7c0a1c; }
.h-c { text-align: left; padding-left: 2px; }
td { height: 19px; padding: 2px 0 0; border-right: 1px solid #b8b8b8; border-bottom: 1px solid #b8b8b8; overflow: hidden; white-space: nowrap; line-height: 14px; }
.n { background: #f0f0f0; text-align: center; }
.k { padding-left: 20px; }
.v { padding-left: 2px; }
.blue { color: #0a0aa0; }
.grey { color: #808080; padding-left: 3px; }
small { font-size: 10px; line-height: 10px; }
.plus { display: inline-block; width: 12px; height: 12px; line-height: 10px; text-align: center; border: 1px solid #999; color: #333; margin-right: 5px; vertical-align: -1px; font-family: "Liberation Sans", sans-serif; }
.cur .n { background: #fad48c; }
.cur .k { background: #0a6cc8; color: #fff; }
.cur .v { background: #d5e6f8; }

/* popup */
.popup { position: absolute; left: 6px; top: 173px; width: 52px; height: 49px; background: #f0f0f0; }
.pop-top { height: 24px; display: flex; padding: 3px 0 0 3px; }
.pop-name { flex: 1; color: #a8a8a8; font: 12px/18px "Liberation Sans", sans-serif; }
.pop-x { width: 20px; height: 18px; background: #e2e2e2; color: #ccc; text-align: center; line-height: 18px; }
.pop-btn { margin: 1px 1px 0; height: 21px; border: 2px solid #8a8a8a; background: #f2f2f2; text-align: center; line-height: 17px; box-shadow: 1px 2px 3px rgba(0,0,0,.3); font-family: "Noto Sans CJK SC", sans-serif; }

/* dialog */
.dialog { position: absolute; left: 735px; top: 59px; width: 640px; height: 429px; border: 1px solid #3f8ed8; border-width: 1px 1px 2px 2px; background: #f0f0f0; box-shadow: 0 0 6px rgba(0,0,0,.25); }
.dlg-title { height: 24px; background: #fff; padding-left: 2px; line-height: 24px; }
.dlg-body { padding: 10px 0 0 7px; }
.dlg-cols { display: flex; gap: 16px; height: 339px; }
.dlg-left { width: 321px; flex: none; padding-top: 5px; display: flex; flex-direction: column; }
.group { height: 136px; flex: none; border: 1px solid #dcdcdc; padding-left: 7px; margin-bottom: 11px; }
.group-label { height: 14px; margin-top: -7px; margin-bottom: 1px; line-height: 14px; width: max-content; background: #f0f0f0; }
.thumbs { display: flex; gap: 4px; width: 305px; height: 122px; padding: 0 4px 3px 0; background: #c0c0c0; }
.thumb-img { height: 119px; background: #000; }
.t1, .t2 { width: 97px; }
.t2 { outline: 3px solid #e00c0c; outline-offset: -3px; }
.t3 { width: 99px; }
.w2 { fill: none; stroke: #fff; stroke-width: 2; }
.lbl { fill: #fff; font: 11.500px "Liberation Serif", serif; }
.lbl.big { font-size: 13px; }
.cap { fill: #eee; font: 13.500px "Liberation Serif", "Noto Sans CJK SC", serif; }
.mm { font-size: 9.500px; }
.info { flex: 1; min-height: 0; background: #fff; border: 1px solid #b4b4b4; padding: 1px; }
.info-grid { display: grid; grid-template-columns: 20px 72px 117px; grid-template-rows: 19px 19px; width: 209px; border-bottom: 1px solid #b4b4b4; border-right: 1px solid #b4b4b4; }
.ig { line-height: 18px; padding-left: 2px; }
.h0 { background: #fff; border-bottom: 1px solid #b4b4b4; }
.h1 { background: #fad48c; }
.h2 { background: linear-gradient(#fff, #efefef); border-bottom: 1px solid #b4b4b4; }
.r0 { background: #fad48c; }
.r1 { background: #d5e6f8; }
.r2 { background: #fff; border-left: 1px solid #b4b4b4; }
.preview { width: 281px; height: 339px; border-top: 1px solid #ddd; outline: 1px solid #ccc; }
.w2b { fill: none; stroke: #fff; stroke-width: 2; }
.w1 { fill: none; stroke: #fff; stroke-width: 1; }
.wf { fill: #fff; stroke: none; }
.dim { fill: #27c427; font: 17px "Liberation Serif", serif; }
.capbig { fill: #ddd; font: 18.500px "Liberation Serif", "Noto Sans CJK SC", serif; }
.mmbig { font-size: 14px; }
.dlg-foot { display: flex; align-items: center; height: 22px; margin-top: 12px; }
.hint { width: 490px; flex: none; white-space: nowrap; letter-spacing: -.18px; }
.btn { width: 72px; height: 22px; flex: none; margin-right: 15px; background: #e1e1e1; border: 1px solid #adadad; text-align: center; line-height: 20px; }
.btn.ok { border: 2px solid #2a77c4; line-height: 18px; }
```
